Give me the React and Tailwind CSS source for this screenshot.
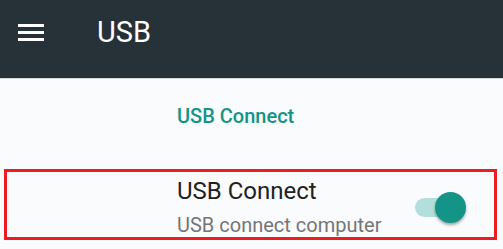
export default function App() {
  return (
    <div className="w-[503px] h-[249px] bg-[#fafbfd] overflow-hidden" style={{ fontFamily: 'Roboto, "Liberation Sans", sans-serif' }}>
      {/* Шапка */}
      <header className="h-[79px] bg-[#263238] flex items-start border-b border-[#d5d8da]">
        <div className="w-[97px] pl-[18px] pt-[24px] flex flex-col gap-[4px]">
          <span className="block w-[26px] h-[3px] bg-white" />
          <span className="block w-[26px] h-[3px] bg-white" />
          <span className="block w-[26px] h-[3px] bg-white" />
        </div>
        <h1 className="text-[29px] text-white leading-none pt-[18px]">USB</h1>
      </header>

      {/* Категория */}
      <div className="h-[90px] pl-[177px] pt-[25px]">
        <span className="block text-[20px] leading-[24px] font-medium text-[#139486]">USB Connect</span>
      </div>

      {/* Пункт настроек */}
      <div className="ml-[4px] w-[493px] h-[71px] border-[3px] border-[#ed1c24] flex items-start pl-[170px] pr-[28px]">
        <div className="flex-1 pt-[5px]">
          <p className="text-[24px] leading-[28px] text-[#212121]">USB Connect</p>
          <p className="text-[20px] leading-[24px] text-[#757575] mt-[8px]">USB connect computer</p>
        </div>
        <div className="relative w-[51px] h-[31px] mt-[20px] flex items-center">
          <span className="block w-[36px] h-[19px] rounded-full bg-[#b2dfdb]" />
          <span className="absolute right-0 top-0 w-[31px] h-[31px] rounded-full bg-[#139486] shadow-[0_2px_3px_rgba(0,0,0,0.35)]" />
        </div>
      </div>
    </div>
  )
}
